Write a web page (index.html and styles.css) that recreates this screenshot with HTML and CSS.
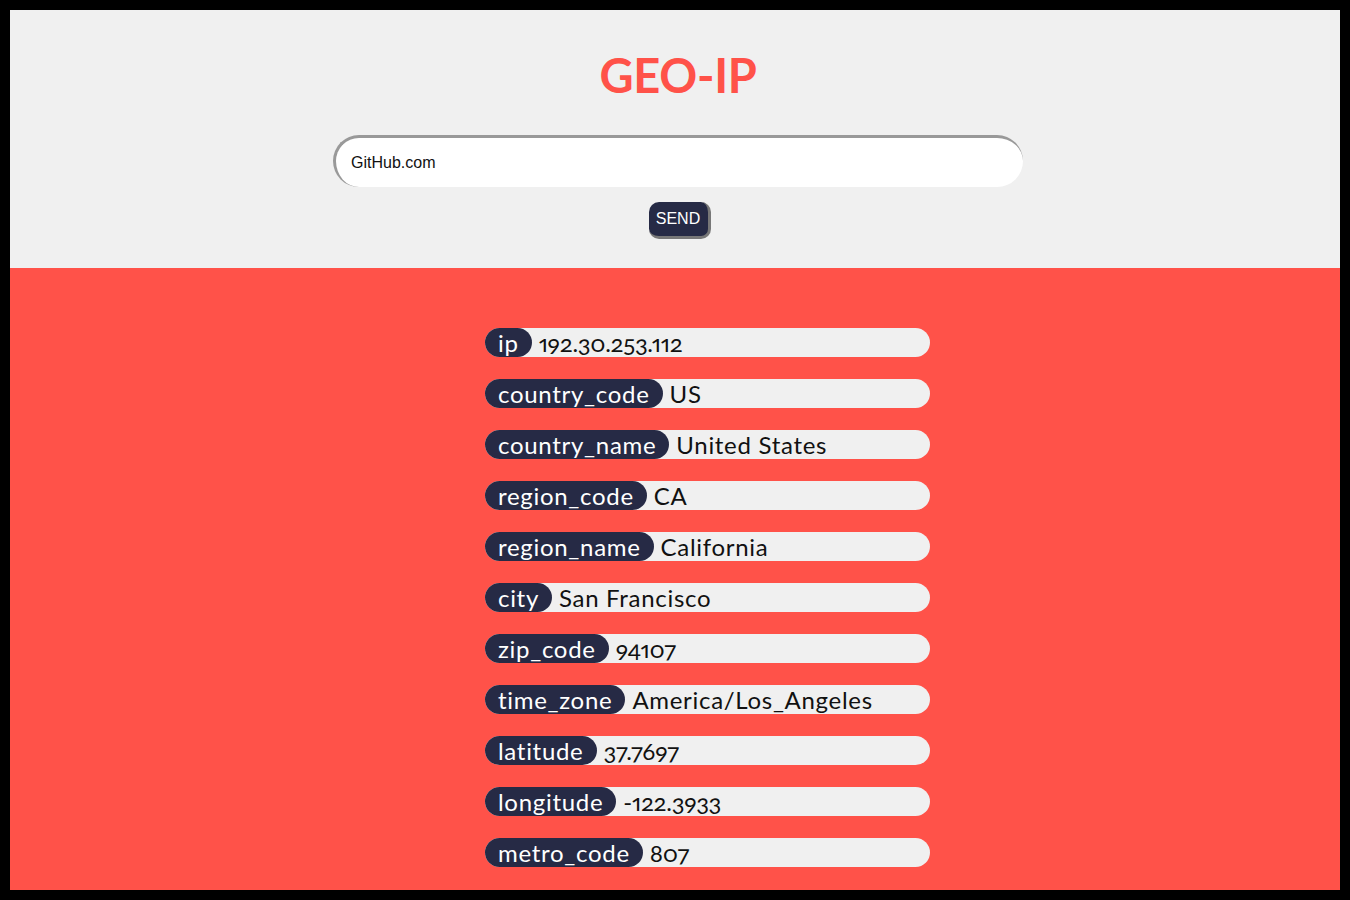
FILE: index.html
```html
<!DOCTYPE html>
<html>
<head>
<meta charset="utf-8">
<title>GEO-IP</title>
<link rel="stylesheet" href="styles.css">
</head>
<body>
<div class="frame">
  <header class="top">
    <h1 class="title">GEO-IP</h1>
    <form class="search">
      <input class="search-input" type="text" value="GitHub.com">
      <button class="send" type="button">SEND</button>
    </form>
  </header>
  <main class="results">
    <ul class="list">
      <li class="row"><span class="key">ip</span><span class="val num">192.30.253.112</span></li>
      <li class="row"><span class="key">country_code</span><span class="val">US</span></li>
      <li class="row"><span class="key">country_name</span><span class="val">United States</span></li>
      <li class="row"><span class="key">region_code</span><span class="val">CA</span></li>
      <li class="row"><span class="key">region_name</span><span class="val">California</span></li>
      <li class="row"><span class="key">city</span><span class="val">San Francisco</span></li>
      <li class="row"><span class="key">zip_code</span><span class="val num">94107</span></li>
      <li class="row"><span class="key">time_zone</span><span class="val">America/Los_Angeles</span></li>
      <li class="row"><span class="key">latitude</span><span class="val num">37.7697</span></li>
      <li class="row"><span class="key">longitude</span><span class="val num">-122.3933</span></li>
      <li class="row"><span class="key">metro_code</span><span class="val num">807</span></li>
    </ul>
  </main>
</div>
</body>
</html>
```

FILE: styles.css
```css
html, body {
  margin: 0;
  padding: 0;
  background: #000;
}
body {
  padding: 10px;
  font-family: Lato, "Open Sans", sans-serif;
}
.frame {
  width: 1330px;
  height: 880px;
  overflow: hidden;
  display: flex;
  flex-direction: column;
  background: #ff5249;
}
.top {
  background: #f0f0f0;
  height: 258px;
  box-sizing: border-box;
  padding-top: 41px;
  display: flex;
  flex-direction: column;
  align-items: center;
}
.title {
  margin: 0 0 0 6px;
  font-size: 47px;
  line-height: 48px;
  font-weight: 700;
  color: #ff5249;
  letter-spacing: -0.3px;
}
.search {
  margin-top: 36px;
  display: flex;
  flex-direction: column;
  align-items: center;
}
.search-input {
  width: 690px;
  height: 52px;
  box-sizing: border-box;
  margin-left: 6px;
  border-radius: 26px;
  border: none;
  border-top: 3px solid #999;
  border-left: 3px solid #999;
  background: #fff;
  padding: 0 0 0 15px;
  font-family: "Liberation Sans", Arial, sans-serif;
  font-size: 16px;
  color: #111;
  outline: none;
}
.send {
  margin-top: 15px;
  margin-left: 10px;
  height: 37px;
  padding: 0 8px 0 7px;
  border-radius: 10px;
  background: #262a45;
  color: #fff;
  border: none;
  border-right: 3px solid #777;
  border-bottom: 3px solid #777;
  font-family: "Liberation Sans", Arial, sans-serif;
  font-size: 16px;
}
.results {
  flex: 1;
  padding-top: 60px;
}
.list {
  list-style: none;
  margin: 0 0 0 475px;
  padding: 0;
  width: 445px;
  display: flex;
  flex-direction: column;
  gap: 22px;
}
.row {
  height: 29px;
  background: #f0f0f0;
  border-radius: 15px;
  display: flex;
  align-items: center;
  font-size: 24px;
  letter-spacing: 0.7px;
  color: #111;
}
.key {
  height: 29px;
  line-height: 30px;
  box-sizing: border-box;
  padding: 0 13px;
  background: #262a45;
  color: #fff;
  border-radius: 15px;
}
.val {
  margin-left: 7px;
  line-height: 30px;
}
.num {
  font-variant-numeric: oldstyle-nums proportional-nums;
  letter-spacing: -0.3px;
}
```
